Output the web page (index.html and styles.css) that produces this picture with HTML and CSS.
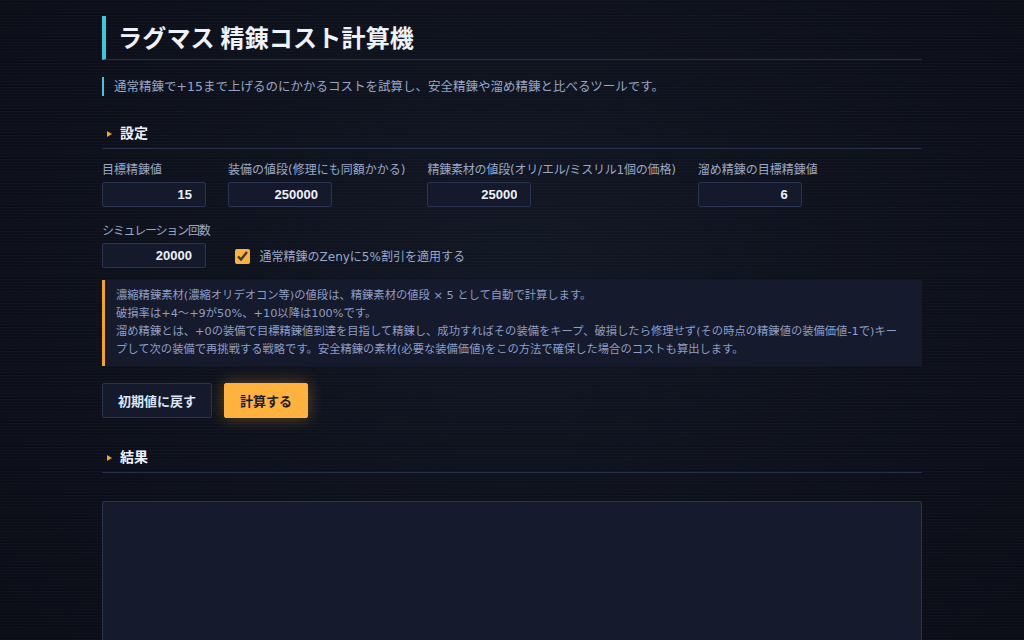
FILE: index.html
```html
<!DOCTYPE html>
<html lang="ja">
<head>
<meta charset="utf-8">
<title>ラグマス 精錬コスト計算機</title>
<link rel="stylesheet" href="styles.css">
</head>
<body>
<div class="page">
  <h1 class="title">ラグマス 精錬コスト計算機</h1>
  <p class="lead">通常精錬で+15まで上げるのにかかるコストを試算し、安全精錬や溜め精錬と比べるツールです。</p>

  <h2 class="section">設定</h2>
  <div class="fields">
    <label class="field">
      <span class="field-label">目標精錬値</span>
      <input class="num" type="text" value="15">
    </label>
    <label class="field">
      <span class="field-label">装備の値段(修理にも同額かかる)</span>
      <input class="num" type="text" value="250000">
    </label>
    <label class="field">
      <span class="field-label field-label-narrow">精錬素材の値段(オリ/エル/ミスリル1個の価格)</span>
      <input class="num" type="text" value="25000">
    </label>
    <label class="field">
      <span class="field-label">溜め精錬の目標精錬値</span>
      <input class="num" type="text" value="6">
    </label>
    <label class="field">
      <span class="field-label field-label-tight">シミュレーション回数</span>
      <input class="num" type="text" value="20000">
    </label>
    <label class="check">
      <input type="checkbox" checked>
      <span>通常精錬のZenyに5%割引を適用する</span>
    </label>
  </div>

  <div class="notice">
    濃縮精錬素材(濃縮オリデオコン等)の値段は、精錬素材の値段 × 5 として自動で計算します。<br>
    破損率は+4～+9が50%、+10以降は100%です。<br>
    溜め精錬とは、+0の装備で目標精錬値到達を目指して精錬し、成功すればその装備をキープ、破損したら修理せず(その時点の精錬値の装備価値-1で)キープして次の装備で再挑戦する戦略です。安全精錬の素材(必要な装備価値)をこの方法で確保した場合のコストも算出します。
  </div>

  <div class="actions">
    <button class="btn btn-reset" type="button">初期値に戻す</button>
    <button class="btn btn-calc" type="button">計算する</button>
  </div>

  <h2 class="section section-result">結果</h2>
  <div class="result"></div>
</div>
</body>
</html>
```

FILE: styles.css
```css
* { box-sizing: border-box; }

html, body {
  margin: 0;
  height: 100%;
}

body {
  background-color: #0d111b;
  background-image:
    repeating-linear-gradient(0deg, rgba(255,255,255,0.018) 0 1px, transparent 1px 3px),
    radial-gradient(ellipse at 50% 40%, #121724 0%, #0c0f19 70%, #0a0d16 100%);
  color: #dfe6f5;
  font-family: "DejaVu Sans", "Noto Sans CJK JP", sans-serif;
  overflow: hidden;
}

.page {
  width: 820px;
  margin: 0 auto;
  padding-top: 16px;
}

.title {
  margin: 0;
  font-family: "Noto Sans CJK JP", "Noto Sans", sans-serif;
  font-size: 24px;
  font-weight: 700;
  line-height: 32px;
  padding: 5px 12px 6px;
  border-left: 4px solid #3cc8dc;
  border-bottom: 1px solid #27304a;
  color: #eef2fb;
  letter-spacing: 0.2px;
}

.lead {
  margin: 17px 0 0;
  padding-left: 10px;
  border-left: 2px solid #3cc8dc;
  font-size: 12.5px;
  line-height: 19px;
  color: #98a6c6;
}

.section {
  position: relative;
  margin: 25px 0 0;
  padding: 0 0 3px 18px;
  font-size: 14px;
  font-weight: 700;
  line-height: 24px;
  color: #eef2fb;
  border-bottom: 1px solid #27304a;
}

.section::before {
  content: "";
  position: absolute;
  left: 5px;
  top: 10px;
  border-left: 5px solid #f5a524;
  border-top: 3px solid transparent;
  border-bottom: 3px solid transparent;
}

.fields {
  display: flex;
  flex-wrap: wrap;
  column-gap: 22px;
  row-gap: 15px;
  align-items: flex-end;
  margin-top: 12px;
}

.field {
  display: flex;
  flex-direction: column;
  gap: 3px;
}

.field-label {
  font-size: 12px;
  line-height: 18px;
  color: #9aa8c8;
  white-space: nowrap;
}

.field-label-narrow {
  letter-spacing: -0.2px;
}

.field-label-tight {
  letter-spacing: -1.2px;
}

.num {
  width: 104px;
  height: 25px;
  background: #141a2c;
  border: 1px solid #2a3350;
  border-radius: 2px;
  color: #eef2fb;
  font-family: "Liberation Sans", Arial, sans-serif;
  font-size: 13px;
  font-weight: 700;
  text-align: right;
  padding: 0 13px 0 6px;
  outline: none;
}

.check {
  display: flex;
  align-items: center;
  gap: 10px;
  height: 25px;
  margin-left: 3px;
  font-size: 12px;
  color: #9aa8c8;
}

.check input {
  width: 15px;
  height: 15px;
  margin: 2px 0 0;
  accent-color: #ffb13d;
}

.notice {
  margin-top: 12px;
  padding: 7px 22px 7px 11px;
  background: #151a2c;
  border-left: 3px solid #f5a524;
  font-size: 11.3px;
  line-height: 18px;
  color: #8e9ec6;
  line-break: strict;
}

.actions {
  display: flex;
  gap: 12px;
  margin-top: 17px;
}

.btn {
  height: 35px;
  padding: 0 15px;
  font-family: "Noto Sans CJK JP", "Noto Sans", sans-serif;
  font-size: 13px;
  font-weight: 700;
  border-radius: 2px;
  cursor: pointer;
}

.btn-reset {
  background: #141a2c;
  border: 1px solid #2a3350;
  color: #dfe6f5;
}

.btn-calc {
  background: #ffb23e;
  border: 1px solid #ffb23e;
  color: #1a1a22;
  box-shadow: 0 0 16px rgba(255, 170, 50, 0.35);
}

.section-result {
  margin-top: 27px;
}

.result {
  margin-top: 28px;
  height: 200px;
  background: #151a2c;
  border: 1px solid #2a3350;
  border-radius: 2px;
}
```
